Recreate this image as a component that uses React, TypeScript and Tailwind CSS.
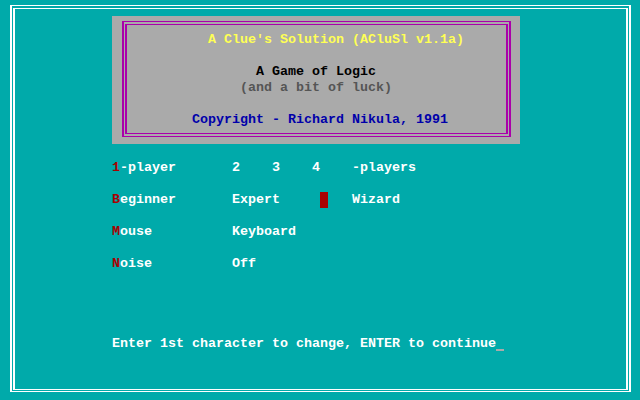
const font = { fontFamily: '"Liberation Mono", "DejaVu Sans Mono", monospace' };

function Hot({ k, rest }: { k: string; rest: string }) {
  return (
    <span>
      <span className="text-[#AA0000]">{k}</span>
      {rest}
    </span>
  );
}

function TitleBox() {
  return (
    <div className="ml-[97px] mt-[7px] h-[128px] w-[408px] bg-[#AAAAAA] pl-[10px] pt-[5px]">
      <div className="h-[116px] w-[389px] border-x-2 border-y border-[#AA00AA] px-px py-[2px]">
        <div className="h-full w-full border-x-2 border-y border-[#AA00AA] pt-[7px]">
          <div className="h-4 pl-[81px] text-[#FFFF55]">A Clue's Solution (ACluSl v1.1a)</div>
          <div className="h-4" />
          <div className="h-4 pl-[129px] text-black">A Game of Logic</div>
          <div className="h-4 pl-[113px] text-[#555555]">(and a bit of luck)</div>
          <div className="h-4" />
          <div className="h-4 pl-[65px] text-[#0000AA]">Copyright - Richard Nikula, 1991</div>
        </div>
      </div>
    </div>
  );
}

function Options() {
  return (
    <div className="ml-[97px] mt-[16px] flex flex-col gap-4 text-white">
      <div className="flex h-4">
        <span className="w-[120px]"><Hot k="1" rest="-player" /></span>
        <span className="w-[40px]">2</span>
        <span className="w-[40px]">3</span>
        <span className="w-[40px]">4</span>
        <span>-players</span>
      </div>
      <div className="flex h-4">
        <span className="w-[120px]"><Hot k="B" rest="eginner" /></span>
        <span className="w-[80px]">Expert</span>
        <span className="w-[40px] pl-2">
          <span className="block h-4 w-2 bg-[#AA0000]" />
        </span>
        <span>Wizard</span>
      </div>
      <div className="flex h-4">
        <span className="w-[120px]"><Hot k="M" rest="ouse" /></span>
        <span>Keyboard</span>
      </div>
      <div className="flex h-4">
        <span className="w-[120px]"><Hot k="N" rest="oise" /></span>
        <span>Off</span>
      </div>
    </div>
  );
}

export default function App() {
  return (
    <div
      className="h-[400px] w-[640px] overflow-hidden bg-[#00AAAA] pl-[10px] pt-[5px] text-[13.333px] font-bold leading-4 whitespace-pre"
      style={font}
    >
      <div className="h-[387px] w-[621px] border-x-2 border-y border-white px-px pt-[2px] pb-px">
        <div className="h-full w-full border-x-2 border-y border-white">
          <TitleBox />
          <Options />
          <div className="ml-[97px] mt-[64px] flex h-4 text-white">
            <span>Enter 1st character to change, ENTER to continue</span>
            <span className="flex h-4 w-2 items-end pb-px">
              <span className="block h-[2px] w-2 bg-[#AAAAAA]" />
            </span>
          </div>
        </div>
      </div>
    </div>
  );
}
